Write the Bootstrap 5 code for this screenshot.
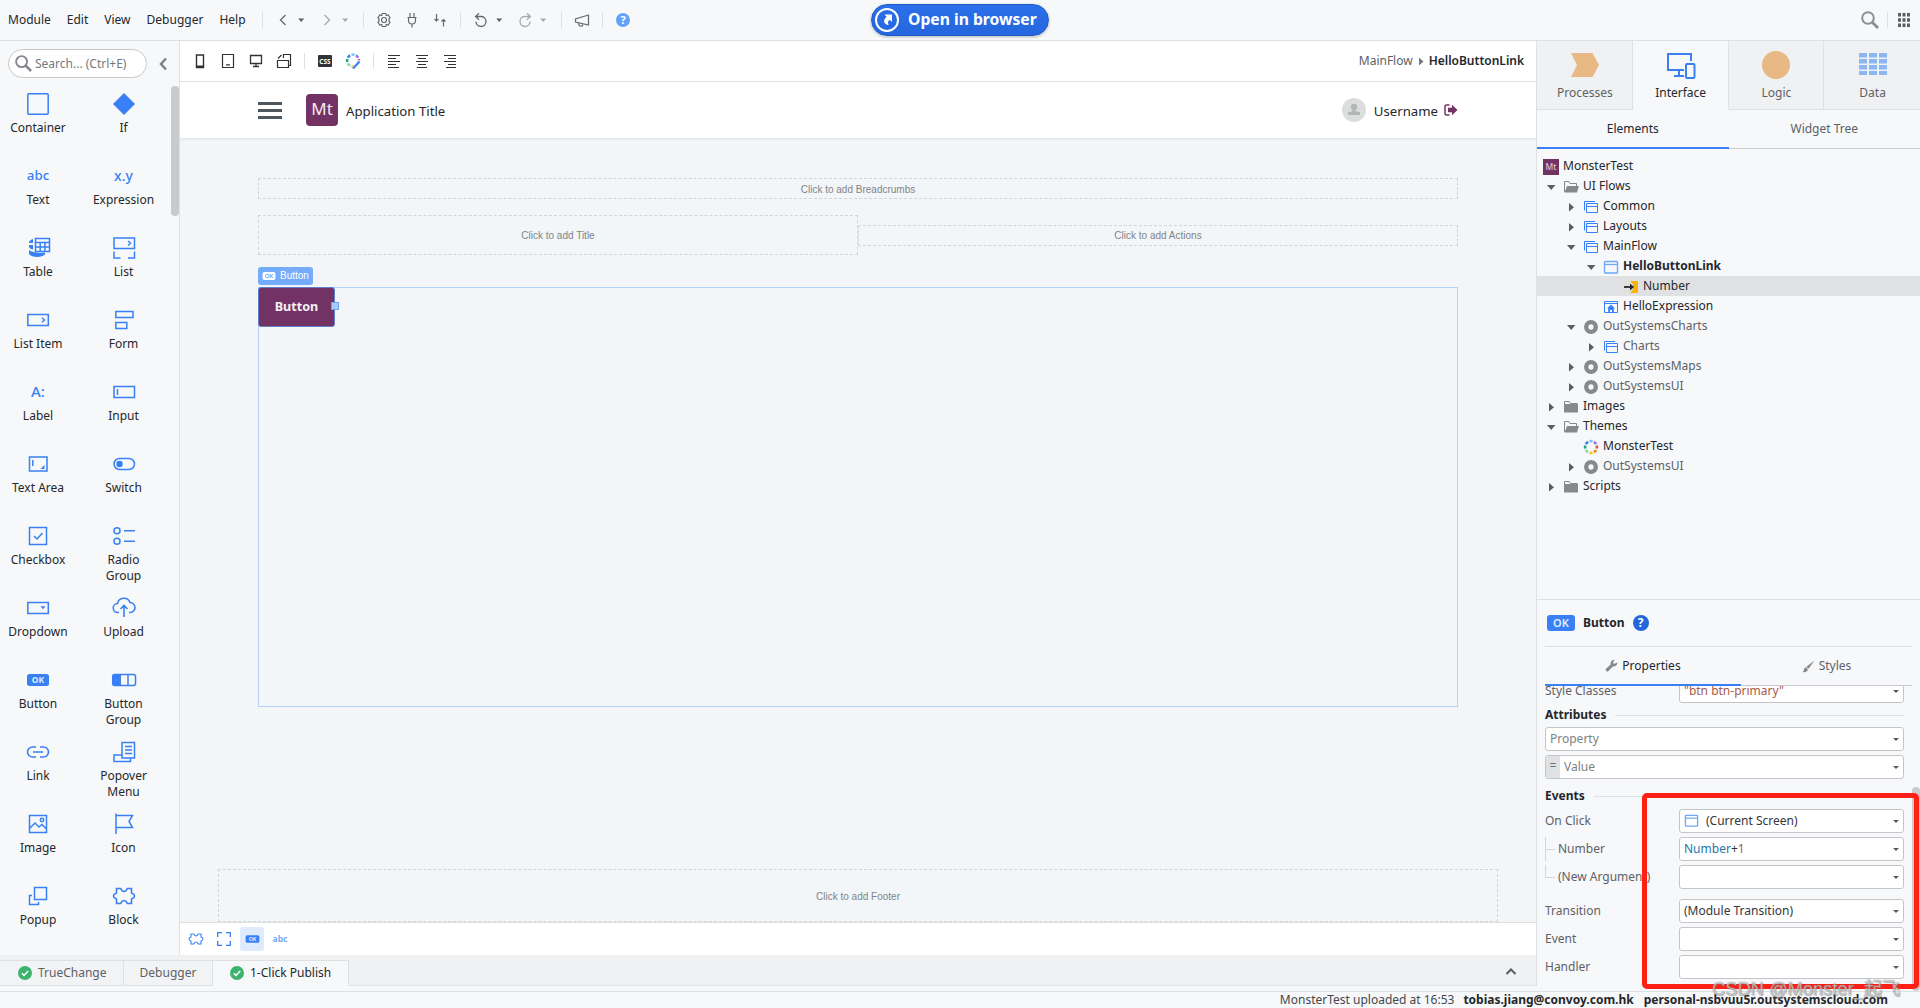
<!DOCTYPE html>
<html lang="en">
<head>
<meta charset="utf-8">
<title>Service Studio - MonsterTest</title>
<link href="https://cdn.jsdelivr.net/npm/bootstrap@5.3.0/dist/css/bootstrap.min.css" rel="stylesheet">
<style>
:root{--line:#dfe0e2;--panel:#f7f8fa;--blue:#3880f4;--ink:#24272b;--dim:#5d6166;--plum:#723364}
body{width:1920px;height:1008px;overflow:hidden;background:var(--panel);color:var(--ink);font:12px/16px "Noto Sans","Noto Sans CJK SC",sans-serif}
svg{display:block;flex:none;overflow:visible}
.topbar{height:41px;border-bottom:1px solid var(--line)}
.menus{width:256px;padding-left:8px}
.menus span:not(:last-child){margin-right:16px}
.slot{width:28px;height:28px;display:flex;align-items:center;justify-content:center;flex:none;color:#65696e}
.slot.ink{color:#2f3338}
.slot svg{width:20px;height:20px}
.caret{width:8px;margin-right:8px;color:#5b5f64;flex:none}
.faded{color:#a6a9ad}
.vsep{width:1px;height:16px;background:var(--line);margin:0 6px;flex:none}
.open-btn{position:absolute;left:871px;top:4px;width:178px;height:32px;border-radius:16px;border:1px solid #1f59c6;background:linear-gradient(#2b70ea,#2566dd);box-shadow:0 1px 3px #0004;color:#fff;font-size:15.7px;font-weight:700;padding-left:3px;white-space:nowrap}
.open-btn span{margin-left:9px;padding-bottom:2px}
.work{height:914px}
.palette{width:180px;border-right:1px solid var(--line);position:relative}
.searchbox{width:139px;height:29px;border:1px solid #c6c8cb;border-radius:15px;background:#fff;color:#75797e;margin:8px 0 0 8px;padding-left:6px}
.tools{display:grid;grid-template-columns:76px 95px;grid-auto-rows:72px;margin-top:14px}
.tool{display:flex;flex-direction:column;align-items:center;text-align:center;white-space:nowrap}
.tool svg{width:24px;height:24px;color:var(--blue);margin-bottom:4px}
.tool .glyph{height:24px;line-height:23px;margin-bottom:4px;color:var(--blue);font-size:13.3px;font-weight:500}
.thumb{position:absolute;width:8px;border-radius:4px;background:#c9cacd}
.subbar{height:41px;background:#fff;border-bottom:1px solid var(--line);padding-left:6px;padding-right:12px}
.stage{width:1357px;border-right:1px solid var(--line)}
.apphead{height:57px;background:#fff;border-bottom:1px solid #e5e8ea;box-shadow:0 1px 2px #0000000c;padding:0 78px 0 78px;font-size:13.2px;position:relative}
.apphead span{padding-top:2px}
.burger{width:24px;height:17px;border-top:3px solid #4f575e;border-bottom:3px solid #4f575e;padding:4px 0}
.burger i{display:block;height:3px;background:#4f575e}
.applogo{width:32px;height:32px;border-radius:4px;background:var(--plum);color:#f3e9f1;font-size:17px;line-height:29px;text-align:center;margin:0 8px 0 24px}
.screen{height:783px;background:#f2f6f9;padding:39px 78px 0 78px;overflow:hidden}
.drop{border:1px dashed #d3d6d9;color:#808488;font:10px/1 "Liberation Sans",Arial,sans-serif;display:flex;align-items:center;justify-content:center;padding-top:2px}
.tagline{width:55px;height:18px;border-radius:3px;background:#74abfa;color:#fff;font:10px/18px "Liberation Sans",Arial,sans-serif;margin:12px 0 2px;padding-left:4px}
.selbox{width:1200px;height:420px;border:1px solid #b3d0f7;margin-bottom:162px}
.plumbtn{position:relative;width:77px;height:40px;margin:-1px;border:1px solid #5f7fcc;border-radius:3px;background:var(--plum);color:#f4f1f5;font-weight:700;font-size:12.6px;line-height:38px;text-align:center}
.plumbtn i{position:absolute;right:-5px;top:14px;width:8px;height:8px;background:#a9cbfa;border:1px solid #6ba3f5}
.viewbar{height:33px;background:#fff;border-top:1px solid var(--line);padding-left:2px}
.viewbar .slot{color:var(--blue)}
.pick{width:24px;height:24px;border-radius:3px;background:#dfebfc;display:flex;align-items:center;justify-content:center}
.side{width:383px;height:950px;position:relative}
.bigtab{width:96px;height:69px;border-right:1px solid var(--line);border-bottom:1px solid var(--line);background:#eff1f3;color:var(--dim);padding:10px 0 0 1px}
.bigtab:last-child{border-right:0}
.bigtab.on{background:var(--panel);border-bottom-color:var(--panel);color:var(--ink)}
.bigtab svg{width:30px;height:28px;margin-bottom:6px}
.half{flex:1;display:flex;justify-content:center;align-items:center;color:var(--dim)}
.half.on{color:var(--ink);border-bottom:2px solid var(--blue)}
.half.off{border-bottom:1px solid #c8cacd}
.tree{height:450px;padding-top:7px}
.node{height:20px;display:flex;align-items:center;line-height:18px;padding-bottom:1px;white-space:nowrap}
.node svg{width:16px;height:16px;margin-right:4px;position:relative;top:1px}
.node svg.tw{color:#5a5e63;margin-right:4px}
.i0{padding-left:6px}.i1{padding-left:6px}.i2{padding-left:26px}.i3{padding-left:46px}.i4{padding-left:86px}
.gap-tw{width:20px}
.node.ext{color:var(--dim)}
.props{border-top:1px solid var(--line);padding:0 8px;height:391px}
.prophead{height:47px;border-bottom:1px solid var(--line);padding-left:2px}
.okbadge{width:28px;height:16px;border-radius:3px;background:var(--blue);color:#e3eefd;font-size:11px;line-height:16px;text-align:center;font-weight:600}
.qm{width:16px;height:16px;border-radius:50%;background:#2566dd;color:#fff;font-weight:700;text-align:center}
.proplist{width:359px;height:304px;overflow:hidden}
.prow{display:flex;height:24px;margin-bottom:4px;color:var(--dim)}
.plabel{width:134px;flex:none;line-height:23px;white-space:nowrap}
.pfield{flex:1;height:24px;border:1px solid #c3c5c8;border-radius:3px;background:#fff;padding:0 4px;display:flex;align-items:center;color:#34373b;line-height:20px;padding-bottom:1px}
.pfield::after{content:"";margin-left:auto;margin-top:2px;border:3px solid transparent;border-top:3.5px solid #55595e;border-bottom:0}
.psec{font-weight:700;display:flex;align-items:center}
.psec::after{content:"";flex:1;height:1px;background:var(--line);margin-left:9px}
.twig{width:9px;height:24px;border-left:1px solid #d4d6d9;margin-right:4px;flex:none}
.twig::after{content:"";display:block;width:9px;height:13px;border-bottom:1px solid #d4d6d9}
.twig.end{height:13px}
.eq{width:14px;align-self:stretch;background:#e0e1e3;margin:0 4px -1px -4px;text-align:center;color:#6e7277}
.mark-red{position:absolute;left:1642px;top:793px;width:277px;height:196px;border:5px solid #ff1f14;border-radius:5px;z-index:5}
.tabstrip{height:31px;background:#eff1f3;width:1537px;padding-top:5px;border-right:1px solid var(--line)}
.btab{height:26px;border:1px solid var(--line);border-left:0;color:var(--dim);display:flex;align-items:center;padding-bottom:1px;background:#f2f3f5}
.btab.on{background:var(--panel);border-bottom-color:var(--panel);color:var(--ink)}
.btab svg{width:14px;height:14px;margin-right:6px}
.status{height:17px;border-top:1px solid var(--line);padding-right:32px;line-height:15px;margin-top:5px;white-space:nowrap}
.wm{position:absolute;left:1712px;top:976px;font:18.3px/26px "Liberation Sans","Noto Sans CJK SC",sans-serif;color:#ffffff80;text-shadow:1px 1px 1px #7778,0 0 1px #555b;z-index:6;white-space:nowrap}
</style>
<script src="https://cdn.jsdelivr.net/npm/bootstrap@5.3.0/dist/js/bootstrap.bundle.min.js"></script>
</head>
<body>
<svg width="0" height="0" class="position-absolute">
<defs>
<symbol id="dn" viewBox="0 0 8 8"><path d="M1.2 2.5h6L4.2 6z" fill="currentColor"/></symbol>
<symbol id="lens" viewBox="0 0 18 18"><circle cx="7" cy="7" r="5.8" fill="none" stroke="currentColor" stroke-width="2"/><path d="m11 11 6 6" stroke="currentColor" stroke-width="2.8"/></symbol>
<symbol id="puz" viewBox="0 0 24 24"><path d="M4.500 4.500H8.500c.8 0 .7 3 3.500 3s2.700-3 3.500-3h4V9c0 .8 3 .2 3 3s-3 2.200-3 3v4.500h-4c-.8 0-.7-3-3.500-3s-2.700 3-3.500 3h-4V15c0-.8-3-.2-3-3s3-2.200 3-3z" fill="none" stroke="currentColor" stroke-width="1.600"/></symbol>
<symbol id="wheel" viewBox="0 0 16 16"><g fill="none" stroke-width="2.600"><circle cx="8" cy="8" r="5.900" stroke="#7cc8f4" pathLength="80" stroke-dasharray="7 73" stroke-dashoffset="23.500"/><circle cx="8" cy="8" r="5.900" stroke="#9575e0" pathLength="80" stroke-dasharray="7 73" stroke-dashoffset="13.500"/><circle cx="8" cy="8" r="5.900" stroke="#e2574c" pathLength="80" stroke-dasharray="7 73" stroke-dashoffset="3.500"/><circle cx="8" cy="8" r="5.900" stroke="#f0932b" pathLength="80" stroke-dasharray="7 73" stroke-dashoffset="-6.500"/><circle cx="8" cy="8" r="5.900" stroke="#fcc419" pathLength="80" stroke-dasharray="7 73" stroke-dashoffset="-16.500"/><circle cx="8" cy="8" r="5.900" stroke="#8fdca5" pathLength="80" stroke-dasharray="7 73" stroke-dashoffset="-26.500"/><circle cx="8" cy="8" r="5.900" stroke="#2ba084" pathLength="80" stroke-dasharray="7 73" stroke-dashoffset="-36.500"/><circle cx="8" cy="8" r="5.900" stroke="#3880f4" pathLength="80" stroke-dasharray="7 73" stroke-dashoffset="-46.500"/></g></symbol>
<symbol id="tr" viewBox="0 0 16 16"><path d="M6 4v8.400l5-4.200z" fill="currentColor"/></symbol>
<symbol id="td" viewBox="0 0 16 16"><path d="M4 6h8.400L8.200 11z" fill="currentColor"/></symbol>
<symbol id="fo" viewBox="0 0 16 16"><path d="M1.500 13V2.500h4.500l1 2h6.500V7" fill="none" stroke="#85888c"/><path d="M4 7h12l-2 6.500H1.500z" fill="#85888c"/></symbol>
<symbol id="fc" viewBox="0 0 16 16"><path d="M1 5h14v8.500H1z" fill="#85888c"/><path d="M1.500 6V2.500h4.800l1 2h7.200" fill="none" stroke="#85888c"/></symbol>
<symbol id="flow" viewBox="0 0 16 16"><path d="M1.500 11.500v-9H12M3.500 4.500h11v9h-11zM3.500 7.500h11" fill="none" stroke="#3880f4"/></symbol>
<symbol id="scr" viewBox="0 0 16 16"><rect x="1.500" y="2.500" width="13" height="11.500" rx=".8" fill="none" stroke="#6fa8f8" stroke-width="1.400"/><path d="M1.500 5.500h13" stroke="#6fa8f8" stroke-width="1.300"/></symbol>
<symbol id="home" viewBox="0 0 16 16"><path d="M1.500 2.500h13v11h-13zM1.500 4.500h13" fill="none" stroke="#3880f4"/><path d="m8 5.500 4 4h-1.200V13H9v-2H7v2H5.200V9.500H4z" fill="#3880f4"/></symbol>
<symbol id="ext" viewBox="0 0 16 16"><circle cx="8" cy="8" r="4.800" fill="none" stroke="#85888c" stroke-width="4.300"/></symbol>
<symbol id="inp" viewBox="0 0 16 16"><path d="M7 2h8v12H7l3-3.500V5z" fill="#f8b500"/><path d="M1 8h8" stroke="#24272b" stroke-width="1.800"/><path d="m7 4.500 4 3.500-4 3.500z" fill="#24272b"/></symbol>
<symbol id="ok" viewBox="0 0 24 24"><rect x="1" y="6" width="22" height="12" rx="2.500" fill="currentColor"/><text x="12" y="15" font-size="8.500" font-weight="700" text-anchor="middle" fill="#dfeaff">OK</text></symbol>
<symbol id="chk" viewBox="0 0 14 14"><circle cx="7" cy="7" r="7" fill="#3db46d"/><path d="m3.800 7.200 2.200 2.200 4.200-4.500" fill="none" stroke="#fff" stroke-width="1.500"/></symbol>
</defs>
</svg>

<header class="topbar d-flex align-items-center">
  <div class="menus d-flex"><span>Module</span><span>Edit</span><span>View</span><span>Debugger</span><span>Help</span></div>
  <div class="vsep"></div>
  <div class="slot"><svg viewBox="0 0 20 20"><path d="m12.500 5-5 5 5 5" fill="none" stroke="currentColor" stroke-width="1.300"/></svg></div>
  <svg class="caret" viewBox="0 0 8 8"><use href="#dn"/></svg>
  <div class="slot faded"><svg viewBox="0 0 20 20"><path d="m7.500 5 5 5-5 5" fill="none" stroke="currentColor" stroke-width="1.300"/></svg></div>
  <svg class="caret faded" viewBox="0 0 8 8"><use href="#dn"/></svg>
  <div class="vsep"></div>
  <div class="slot"><svg viewBox="0 0 20 20" fill="none" stroke="currentColor" stroke-width="1.200"><path d="M8.300 3.500h3.400l.6 2 1.900-.5 1.800 2.800-1 1.200v2l1 1.200-1.800 2.800-1.900-.5-.6 2H8.300l-.6-2-1.900.5L4 12.200 5 11V9L4 7.800 5.800 5l1.900.5z"/><circle cx="10" cy="10" r="2.500"/></svg></div>
  <div class="slot"><svg viewBox="0 0 20 20" fill="none" stroke="currentColor" stroke-width="1.200"><path d="M8 3v4M12 3v4M5.500 7.500h9M6.500 7.500v3a3.500 3.500 0 0 0 7 0v-3M10 14v3.500"/></svg></div>
  <div class="slot"><svg viewBox="0 0 20 20" fill="none" stroke="currentColor" stroke-width="1.200"><path d="M6.500 4v7M4.500 9l2 2 2-2M13.500 16.500v-7M11.500 11.500l2-2 2 2"/></svg></div>
  <div class="vsep"></div>
  <div class="slot"><svg viewBox="0 0 20 20" fill="none" stroke="currentColor" stroke-width="1.300"><path d="M5 6.500h5.500A5 5 0 1 1 5 11.500M8 3.300 4.600 6.500 8 9.700"/></svg></div>
  <svg class="caret" viewBox="0 0 8 8"><use href="#dn"/></svg>
  <div class="slot faded"><svg viewBox="0 0 20 20" fill="none" stroke="currentColor" stroke-width="1.300"><path d="M15 6.500H9.500a5 5 0 1 0 5.500 5M12 3.300l3.400 3.200L12 9.700"/></svg></div>
  <svg class="caret faded" viewBox="0 0 8 8"><use href="#dn"/></svg>
  <div class="vsep"></div>
  <div class="slot"><svg viewBox="0 0 20 20" fill="none" stroke="currentColor" stroke-width="1.200"><path d="M16.500 5v10L3.500 12V9zM6 12.500l1.500 3.500h3v-2.500"/></svg></div>
  <div class="vsep"></div>
  <div class="slot"><svg viewBox="0 0 20 20"><circle cx="10" cy="10" r="7" fill="#64a2f7"/><text x="10" y="14" font-size="11" font-weight="700" fill="#fff" text-anchor="middle">?</text></svg></div>
  <div class="open-btn d-flex align-items-center"><svg width="24" height="24" viewBox="0 0 24 24"><circle cx="12" cy="12" r="11" fill="none" stroke="#fff" stroke-width="2"/><path d="M9.500 6.500h7.500V14l-2.300-2.300c-2 1.500-2 3-1 5.300-4-.5-7-4-2-8.300z" fill="#fff"/></svg><span>Open in browser</span></div>
  <div class="ms-auto d-flex align-items-center pe-2">
    <svg width="18" height="18" viewBox="0 0 18 18" style="color:#8b8e92"><use href="#lens"/></svg>
    <div class="vsep ms-2 me-2"></div>
    <svg width="16" height="14" viewBox="0 0 16 14" fill="#5a5e63"><path d="M2 0h3v3.500H2zM6.500 0h3v3.500h-3zM11 0h3v3.500h-3zM2 5.200h3v3.500H2zM6.500 5.200h3v3.500h-3zM11 5.200h3v3.500h-3zM2 10.400h3v3.500H2zM6.500 10.400h3v3.500h-3zM11 10.400h3v3.500h-3z"/></svg>
  </div>
</header>

<div class="work d-flex">
  <aside class="palette">
    <div class="d-flex align-items-center">
      <div class="searchbox d-flex align-items-center"><svg width="17" height="17" viewBox="0 0 18 18" class="me-1" style="color:#85888c"><use href="#lens"/></svg><span style="margin-left:-1px">Search... (Ctrl+E)</span></div>
      <svg class="mt-2 ms-2" width="16" height="16" viewBox="0 0 16 16"><path d="m11 2.500-5 5.500 5 5.500" fill="none" stroke="#7d8085" stroke-width="2.500"/></svg>
    </div>
    <div class="tools">
      <div class="tool"><svg viewBox="0 0 24 24"><rect x="1.800" y="1.800" width="20.400" height="20.400" rx="1" fill="none" stroke="currentColor" stroke-width="1.500"/></svg>Container</div>
      <div class="tool"><svg viewBox="0 0 24 24"><path d="M12 1 23 12 12 23 1 12z" fill="currentColor"/></svg>If</div>
      <div class="tool"><div class="glyph">abc</div>Text</div>
      <div class="tool"><div class="glyph" style="font-size:14px">x.y</div>Expression</div>
      <div class="tool"><svg viewBox="0 0 24 24"><path d="M7 3C4 4 3 5 3 7h4zM3 9h4v4.500C4.500 13 3 12 3 10.500zM3 14c2 1.500 4 2 7 2.500 3 .5 6 .5 9 0v2c-3 3-13 3.500-16-.5z" fill="currentColor"/><path d="M9.500 2.500h14v13h-14zM9.500 6.500h14M9.500 11h14M14.200 6.500v9M18.900 6.500v9" fill="none" stroke="currentColor" stroke-width="1.500"/></svg>Table</div>
      <div class="tool"><svg viewBox="0 0 24 24" fill="none" stroke="currentColor" stroke-width="1.500"><path d="M2 2h20.500v10.500H2zM16 5l2.500 2.300L16 9.500M2 15.500V22h6.500M22.500 15.500V22H16"/></svg>List</div>
      <div class="tool"><svg viewBox="0 0 24 24" fill="none" stroke="currentColor" stroke-width="1.500"><path d="M1.800 6.500h20.500v11H1.800zM16 9.800l2.500 2.200-2.500 2.300"/></svg>List Item</div>
      <div class="tool"><svg viewBox="0 0 24 24" fill="none" stroke="currentColor" stroke-width="1.500"><path d="M3.800 3.500H21v6H3.800zM3.800 14.500h11v6h-11z"/></svg>Form</div>
      <div class="tool"><div class="glyph" style="font-size:15px">A:</div>Label</div>
      <div class="tool"><svg viewBox="0 0 24 24" fill="none" stroke="currentColor" stroke-width="1.500"><path d="M2 6.500h20.500v11H2zM5.500 9v6"/></svg>Input</div>
      <div class="tool"><svg viewBox="0 0 24 24" fill="none" stroke="currentColor" stroke-width="1.500"><path d="M3.500 5h17.500v14H3.500zM6.800 8v6"/><path d="M18.500 13v4h-4z" fill="currentColor" stroke="none"/></svg>Text Area</div>
      <div class="tool"><svg viewBox="0 0 24 24"><rect x="2" y="6.500" width="20.500" height="11" rx="5.500" fill="none" stroke="currentColor" stroke-width="1.500"/><circle cx="7.500" cy="12" r="3.200" fill="currentColor"/></svg>Switch</div>
      <div class="tool"><svg viewBox="0 0 24 24" fill="none" stroke="currentColor" stroke-width="1.500"><path d="M3.500 3.500h17v17h-17zM8 12l3 3 5.500-6"/></svg>Checkbox</div>
      <div class="tool"><svg viewBox="0 0 24 24" fill="none" stroke="currentColor" stroke-width="1.500"><circle cx="5" cy="6.800" r="3"/><circle cx="5" cy="17.200" r="3"/><path d="M12 6.800h11M12 17.200h11"/></svg>Radio<br>Group</div>
      <div class="tool"><svg viewBox="0 0 24 24" fill="none" stroke="currentColor" stroke-width="1.500"><path d="M1.800 6.500h20.500v11H1.800z"/><path d="M14.500 10.200h5l-2.500 3z" fill="currentColor" stroke="none"/></svg>Dropdown</div>
      <div class="tool"><svg viewBox="0 0 24 24" fill="none" stroke="currentColor" stroke-width="1.600"><path d="M7 16.500H6a4.500 4.500 0 0 1-.5-9A6.500 6.500 0 0 1 18 6.500a5 5 0 0 1 0 10h-1M12 21V10M8.500 13 12 9.500l3.500 3.500"/></svg>Upload</div>
      <div class="tool"><svg viewBox="0 0 24 24"><use href="#ok"/></svg>Button</div>
      <div class="tool"><svg viewBox="0 0 24 24"><rect x=".7" y="6.500" width="22.800" height="11" rx="2" fill="none" stroke="currentColor" stroke-width="1.500"/><path d="M1 6.500h8v11H1z" fill="currentColor"/><path d="M16 6.500v11" stroke="currentColor" stroke-width="1.500"/></svg>Button<br>Group</div>
      <div class="tool"><svg viewBox="0 0 24 24" fill="none" stroke="currentColor" stroke-width="1.600"><path d="M10 7H6.500a5 5 0 0 0 0 10H10M14 7h3.500a5 5 0 0 1 0 10H14M7 12h10"/></svg>Link</div>
      <div class="tool"><svg viewBox="0 0 24 24" fill="none" stroke="currentColor" stroke-width="1.500"><path d="M10 2.500h12.500V18H10zM13 6.500h7M13 10h7M13 13.500h7M10 15H2v6.500h16.500V18"/></svg>Popover<br>Menu</div>
      <div class="tool"><svg viewBox="0 0 24 24" fill="none" stroke="currentColor" stroke-width="1.500"><path d="M3.500 3.500h17v17h-17zM4 16l5-5 4 4 3-2.500 4.500 4.500"/><circle cx="16" cy="8" r="1.700"/></svg>Image</div>
      <div class="tool"><svg viewBox="0 0 24 24" fill="none" stroke="currentColor" stroke-width="1.500"><path d="M4 1.500V22M4 3.500h16.500L17 9.500l3.500 6H4"/></svg>Icon</div>
      <div class="tool"><svg viewBox="0 0 24 24" fill="none" stroke="currentColor" stroke-width="1.500"><path d="M8.500 3.500h12v12h-12zM6 11.500H3.500v9h9V18"/></svg>Popup</div>
      <div class="tool"><svg viewBox="0 0 24 24"><use href="#puz"/></svg>Block</div>
    </div>
    <div class="thumb" style="left:171px;top:45px;height:130px"></div>
  </aside>

  <main class="stage">
    <div class="subbar d-flex align-items-center">
      <div class="slot ink"><svg viewBox="0 0 20 20"><path d="M6.500 4h7v12.500h-7z" fill="none" stroke="currentColor" stroke-width="1.400"/><path d="M6.500 14.500h7v2h-7z" fill="currentColor"/></svg></div>
      <div class="slot ink"><svg viewBox="0 0 20 20" fill="none" stroke="currentColor" stroke-width="1.200"><path d="M4.500 3.500h11v13h-11zM8 13.800h4"/></svg></div>
      <div class="slot ink"><svg viewBox="0 0 20 20" fill="none" stroke="currentColor" stroke-width="1.300"><path d="M4.500 4.500h11v8h-11zM10 12.500V16M7 15.500h6"/></svg></div>
      <div class="slot ink"><svg viewBox="0 0 20 20" fill="none" stroke="currentColor" stroke-width="1.200"><path d="M3.500 9.500h11v7h-11zM9.500 7V3.500h7v11h-2M4 7.500l3.500-3.500"/></svg></div>
      <div class="vsep"></div>
      <div class="slot ink"><svg viewBox="0 0 20 20"><rect x="3" y="4" width="14" height="12" rx="1" fill="currentColor"/><text x="10" y="12.500" font-size="6.500" font-weight="700" fill="#fff" text-anchor="middle">CSS</text></svg></div>
      <div class="slot"><svg viewBox="0 0 20 20"><use href="#wheel" x="2" y="1.500" width="16" height="16"/><path d="m10.500 17 6.500-7" stroke="#fff" stroke-width="4"/><path d="m10 17.500 6.500-7" stroke="#3880f4" stroke-width="2.200"/></svg></div>
      <div class="vsep"></div>
      <div class="slot ink"><svg viewBox="0 0 20 20" stroke="currentColor" stroke-width="1"><path d="M4 4.500h12M4 7.500h8M4 10.500h12M4 13.500h8M4 16.500h11"/></svg></div>
      <div class="slot ink"><svg viewBox="0 0 20 20" stroke="currentColor" stroke-width="1"><path d="M4 4.500h12M6 7.500h8M4 10.500h12M6 13.500h8M5 16.500h10"/></svg></div>
      <div class="slot ink"><svg viewBox="0 0 20 20" stroke="currentColor" stroke-width="1"><path d="M4 4.500h12M8 7.500h8M4 10.500h12M8 13.500h8M6 16.500h10"/></svg></div>
      <div class="ms-auto d-flex align-items-center"><span style="color:#5d6166">MainFlow</span><svg width="16" height="12" viewBox="0 0 16 12"><path d="M6 2.500v8l4.500-4z" fill="#75797e"/></svg><span style="font-weight:600">HelloButtonLink</span></div>
    </div>
    <div class="apphead d-flex align-items-center">
      <div class="burger"><i></i></div>
      <div class="applogo">Mt</div><span>Application Title</span>
      <svg class="ms-auto" width="24" height="24" viewBox="0 0 24 24"><circle cx="12" cy="12" r="12" fill="#dcdddd"/><circle cx="12" cy="9" r="3.200" fill="#b4b5b6"/><path d="M10.500 10h3v3l4.500 1.500V17H6v-2.500l4.500-1.500z" fill="#b4b5b6"/></svg>
      <span style="margin:0 6px 0 8px">Username</span>
      <svg width="14" height="12" viewBox="0 0 14 12"><path d="M5.500 1H2.500Q1 1 1 2.500v7Q1 11 2.500 11h3" fill="none" stroke="#723364" stroke-width="1.500"/><path d="M4 3.700h4V.7L13.500 6 8 11.300v-3H4z" fill="#723364"/></svg>
    </div>
    <div class="screen">
      <div class="drop" style="height:21px">Click to add Breadcrumbs</div>
      <div class="d-flex align-items-center" style="margin-top:16px">
        <div class="drop flex-fill w-50" style="height:40px">Click to add Title</div>
        <div class="drop flex-fill w-50" style="height:21px">Click to add Actions</div>
      </div>
      <div class="tagline d-flex align-items-center"><svg width="14" height="14" viewBox="0 0 24 24"><rect x="1" y="5" width="22" height="14" rx="3" fill="#fff"/><text x="12" y="16" font-size="10" font-weight="700" fill="#74abfa" text-anchor="middle">OK</text></svg><span class="ms-1">Button</span></div>
      <div class="selbox"><div class="plumbtn">Button<i></i></div></div>
      <div class="drop" style="height:53px;margin:0 -40px">Click to add Footer</div>
    </div>
    <div class="viewbar d-flex align-items-center">
      <div class="slot"><svg style="width:16px" viewBox="0 0 24 24"><use href="#puz"/></svg></div>
      <div class="slot"><svg style="width:14px;height:14px" viewBox="0 0 14 14"><path d="M.7 5V.7H5M9 .7h4.300V5M13.300 9v4.300H9M5 13.300H.7V9" fill="none" stroke="currentColor" stroke-width="1.300"/></svg></div>
      <div class="slot"><div class="pick"><svg style="width:15px" viewBox="0 0 24 24"><use href="#ok"/></svg></div></div>
      <div class="slot" style="font-size:8.500px;font-weight:700;color:#74abfa">abc</div>
    </div>
  </main>

  <aside class="side">
    <div class="d-flex">
      <div class="bigtab d-flex flex-column align-items-center"><svg viewBox="0 0 30 28"><path d="M1 2h21.500l6.500 12-6.500 12H1l6-12z" fill="#e8b985"/></svg>Processes</div>
      <div class="bigtab on d-flex flex-column align-items-center"><svg viewBox="0 0 30 28" fill="none" stroke="#3880f4" stroke-width="2"><path d="M25 10V3H2v16h16M13 19v6M8 25h10"/><rect x="20" y="13" width="8.500" height="14" rx="1"/></svg>Interface</div>
      <div class="bigtab d-flex flex-column align-items-center"><svg viewBox="0 0 30 28"><circle cx="15" cy="14" r="14" fill="#e8b985"/></svg>Logic</div>
      <div class="bigtab d-flex flex-column align-items-center"><svg viewBox="0 0 30 28" fill="#8bb8f3"><path d="M1 2h8v4.500H1zM11 2h8v4.500h-8zM21 2h8v4.500h-8zM1 8h8v4.500H1zM11 8h8v4.500h-8zM21 8h8v4.500h-8zM1 14h8v4.500H1zM11 14h8v4.500h-8zM21 14h8v4.500h-8zM1 20h8v4H1zM11 20h8v4h-8zM21 20h8v4h-8z"/></svg>Data</div>
    </div>
    <div class="d-flex" style="height:39px"><div class="half on">Elements</div><div class="half off">Widget Tree</div></div>
    <div class="tree">
      <div class="node i0"><svg viewBox="0 0 16 16"><path d="M0 0h16v16H0z" fill="#723364"/><text x="8" y="11" font-size="8.500" fill="#e5d3e1" text-anchor="middle">Mt</text></svg>MonsterTest</div>
      <div class="node i1"><svg class="tw"><use href="#td"/></svg><svg><use href="#fo"/></svg>UI Flows</div>
      <div class="node i2"><svg class="tw"><use href="#tr"/></svg><svg><use href="#flow"/></svg>Common</div>
      <div class="node i2"><svg class="tw"><use href="#tr"/></svg><svg><use href="#flow"/></svg>Layouts</div>
      <div class="node i2"><svg class="tw"><use href="#td"/></svg><svg><use href="#flow"/></svg>MainFlow</div>
      <div class="node i3 fw-bold"><svg class="tw"><use href="#td"/></svg><svg><use href="#scr"/></svg>HelloButtonLink</div>
      <div class="node i4" style="background:#e0e1e3"><svg><use href="#inp"/></svg>Number</div>
      <div class="node i3"><div class="gap-tw"></div><svg><use href="#home"/></svg>HelloExpression</div>
      <div class="node i2 ext"><svg class="tw"><use href="#td"/></svg><svg><use href="#ext"/></svg>OutSystemsCharts</div>
      <div class="node i3 ext"><svg class="tw"><use href="#tr"/></svg><svg><use href="#flow"/></svg>Charts</div>
      <div class="node i2 ext"><svg class="tw"><use href="#tr"/></svg><svg><use href="#ext"/></svg>OutSystemsMaps</div>
      <div class="node i2 ext"><svg class="tw"><use href="#tr"/></svg><svg><use href="#ext"/></svg>OutSystemsUI</div>
      <div class="node i1"><svg class="tw"><use href="#tr"/></svg><svg><use href="#fc"/></svg>Images</div>
      <div class="node i1"><svg class="tw"><use href="#td"/></svg><svg><use href="#fo"/></svg>Themes</div>
      <div class="node i2"><div class="gap-tw"></div><svg><use href="#wheel"/></svg>MonsterTest</div>
      <div class="node i2 ext"><svg class="tw"><use href="#tr"/></svg><svg><use href="#ext"/></svg>OutSystemsUI</div>
      <div class="node i1"><svg class="tw"><use href="#tr"/></svg><svg><use href="#fc"/></svg>Scripts</div>
    </div>
    <section class="props">
      <div class="prophead d-flex align-items-center"><div class="okbadge">OK</div><b class="ms-2">Button</b><div class="qm ms-2">?</div></div>
      <div class="d-flex" style="height:39px">
        <div class="half on" style="flex:none;width:196px"><svg class="me-1" width="13" height="13" viewBox="0 0 12 12"><path d="M.5 9.500 5.200 5Q4.800 1 9 .8L7.500 2.700l.3 1.400 1.400.3L11.300 3Q11.500 7 7.200 6.900L2.700 11.500q-2 .3-2.200-2z" fill="#85888c"/></svg>Properties</div>
        <div class="half off"><svg class="me-1" width="13" height="13" viewBox="0 0 12 12"><path d="M11.500.5 6 8 4 6.200zM3.500 6.800l2 1.800Q5 11.500.5 11.200 2 10 1.800 8.800 2 7 3.500 6.800z" fill="#85888c"/></svg>Styles</div>
      </div>
      <div class="proplist">
        <div class="prow" style="margin-top:-7px;margin-bottom:0"><div class="plabel">Style Classes</div><div class="pfield" style="color:#a85a48">"btn btn-primary"</div></div>
        <div class="psec" style="height:24px">Attributes</div>
        <div class="prow"><div class="pfield" style="color:#7d8085">Property</div></div>
        <div class="prow"><div class="pfield" style="color:#7d8085"><span class="eq">=</span>Value</div></div>
        <div class="psec" style="height:26px;margin-top:-2px;padding-top:4px;margin-bottom:2px">Events</div>
        <div class="prow"><div class="plabel">On Click</div><div class="pfield"><svg width="15" height="15" style="margin-right:7px"><use href="#scr"/></svg>(Current Screen)</div></div>
        <div class="prow"><div class="plabel d-flex"><i class="twig"></i>Number</div><div class="pfield"><span style="color:#2277a8">Number</span>+<span style="color:#a85a48">1</span></div></div>
        <div class="prow" style="margin-bottom:10px"><div class="plabel d-flex"><i class="twig end"></i>(New Argument)</div><div class="pfield"></div></div>
        <div class="prow"><div class="plabel">Transition</div><div class="pfield">(Module Transition)</div></div>
        <div class="prow"><div class="plabel">Event</div><div class="pfield"></div></div>
        <div class="prow"><div class="plabel">Handler</div><div class="pfield"></div></div>
      </div>
    </section>
    <div class="thumb" style="left:375px;top:746px;height:204px"></div>
  </aside>
</div>

<div class="tabstrip d-flex">
  <div class="btab" style="width:124px;padding-left:18px"><svg><use href="#chk"/></svg>TrueChange</div>
  <div class="btab justify-content-center" style="width:89px">Debugger</div>
  <div class="btab on" style="width:136px;padding-left:17px"><svg><use href="#chk"/></svg>1-Click Publish</div>
  <div class="flex-fill d-flex justify-content-end align-items-center border-bottom" style="padding-right:18px"><svg width="14" height="14" viewBox="0 0 14 14"><path d="m2.500 8 4.500-4.500L11.500 8" fill="none" stroke="#5a5e63" stroke-width="2"/></svg></div>
</div>
<footer class="status d-flex justify-content-end"><span style="color:#44474b">MonsterTest uploaded at 16:53</span><b style="margin-left:9px">tobias.jiang@convoy.com.hk</b><b style="margin-left:10px">personal-nsbvuu5r.outsystemscloud.com</b></footer>
<div class="mark-red"></div>
<div class="wm">CSDN @Monster_起飞</div>
</body>
</html>
